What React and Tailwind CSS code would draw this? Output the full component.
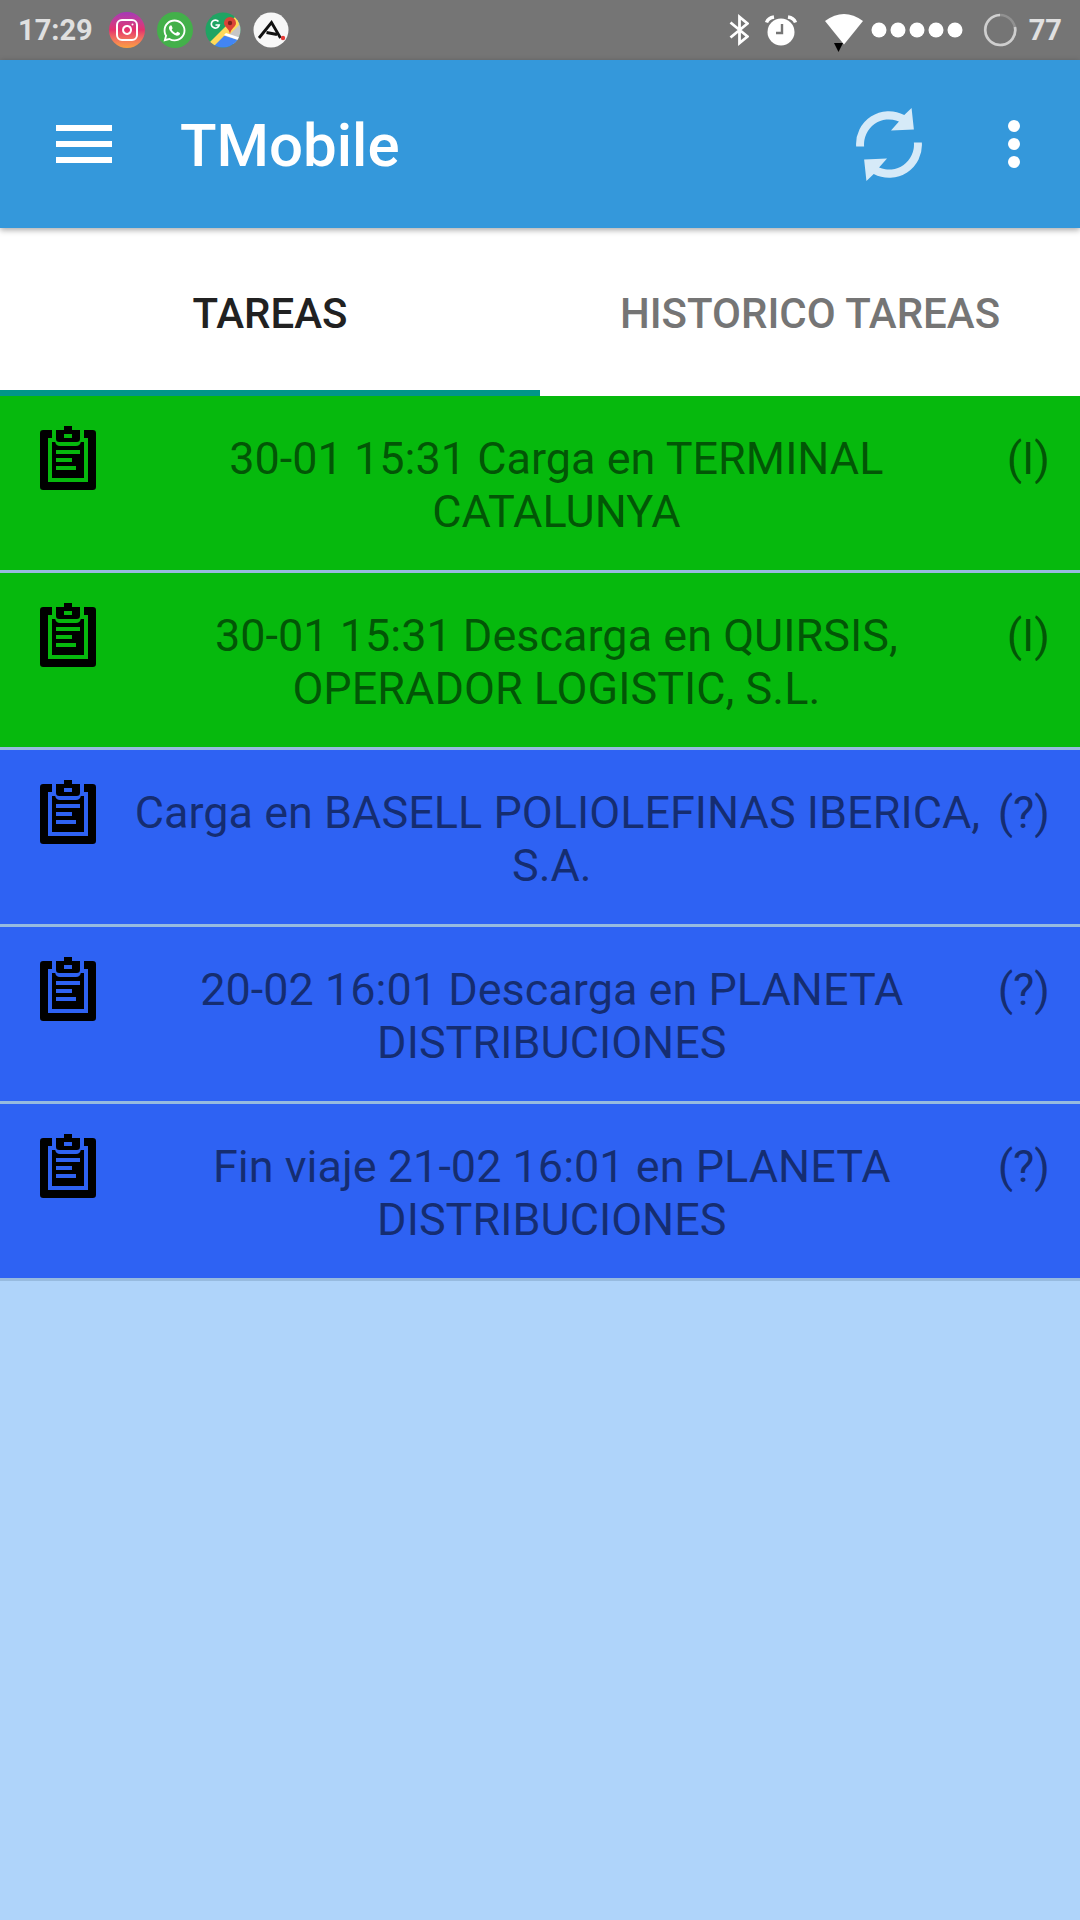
import React, { useState } from "react";
import { FaWhatsapp } from "react-icons/fa";
import { Instagram } from "lucide-react";

const tasks = [
  { id: 1, text: "30-01 15:31 Carga en TERMINAL CATALUNYA", status: "(I)" },
  { id: 2, text: "30-01 15:31 Descarga en QUIRSIS, OPERADOR LOGISTIC, S.L.", status: "(I)" },
  { id: 3, text: " Carga en BASELL POLIOLEFINAS IBERICA, S.A.", status: "(?)" },
  { id: 4, text: "20-02 16:01 Descarga en PLANETA DISTRIBUCIONES", status: "(?)" },
  { id: 5, text: "Fin viaje 21-02 16:01 en PLANETA DISTRIBUCIONES", status: "(?)" },
];

const ClipboardIcon = () => (
  <svg viewBox="0 0 14 16" className="w-14 h-16 shrink-0" aria-hidden="true">
    <path d="M.8 1H3v2H2v11h10V3h-1V1h2.200a.8.8 0 0 1 .8.8v13.400a.8.8 0 0 1-.8.8H.8a.8.8 0 0 1-.8-.8V1.800A.8.8 0 0 1 .8 1Z" />
    <path
      fillRule="evenodd"
      d="M6 0h2v1h2v2.200a.8.8 0 0 1-.8.8H4.800a.8.8 0 0 1-.8-.8V1h2ZM6 2v1h2V2Z"
    />
    <path
      fillRule="evenodd"
      d="M3 4h.8q.2 1 1.200 1h4q1 0 1.200-1h.8v9H3ZM4 6v1h6V6ZM4 8v1h4V8ZM4 10v1h5v-1Z"
    />
  </svg>
);

const RefreshIcon = () => (
  <svg viewBox="0 0 198 220" className="w-[66px] h-[73px]" fill="#d6eaf8" aria-hidden="true">
    <path d="M0 116A99 99 0 0 1 145 21L167 0 174 65 105 68 129 41A75 75 0 0 0 24 116Z" />
    <path d="M198 104A99 99 0 0 1 53 199L31 220 24 155 93 152 69 179A75 75 0 0 0 174 104Z" />
  </svg>
);

const MapsIcon = () => (
  <svg viewBox="0 0 36 36" className="w-9 h-9">
    <defs>
      <clipPath id="mapsClip">
        <circle cx="18" cy="18" r="17.5" />
      </clipPath>
    </defs>
    <g clipPath="url(#mapsClip)">
      <rect width="36" height="36" fill="#1fa463" />
      <path d="M36 4 14 25l22 11Z" fill="#c6c6c6" />
      <path d="M17 23 4 37h32V29Z" fill="#4285f4" />
      <path d="M32 3 2 33l5 3L19 24l5-1 10-10Z" fill="#ffd95a" />
      <path d="M19 23 36 29v-3L21 21Z" fill="#fff" />
      <path d="M25 22c-1-6-6-7-6-11a6 6 0 0 1 12 0c0 4-5 5-6 11Z" fill="#db4437" />
      <circle cx="25" cy="11" r="2.200" fill="#7b231b" />
      <path d="M13.500 9.600A4 4 0 1 0 14.200 13H10.500" fill="none" stroke="#fff" strokeWidth="1.700" />
    </g>
  </svg>
);

const StatusBar = () => (
  <div className="flex items-center justify-between h-[60px] px-[18px] bg-[#757575] text-[#e0e0e0] text-[29px] font-bold">
    <div className="flex items-center gap-4">
      <span className="pt-0.5">17:29</span>
      <div className="flex items-center gap-3">
        <span className="flex items-center justify-center w-9 h-9 rounded-full bg-linear-to-b from-[#a538b8] via-[#e5306c] to-[#fba03c] text-white">
          <Instagram size={24} strokeWidth={2} />
        </span>
        <span className="flex items-center justify-center w-9 h-9 rounded-full bg-[#43b04a] text-white">
          <FaWhatsapp size={25} />
        </span>
        <MapsIcon />
        <svg viewBox="0 0 36 36" className="w-9 h-9">
          <circle cx="18" cy="18" r="17.500" fill="#f7f7f7" />
          <path d="M6 26 18.500 10.500 27.500 26M13.500 20.500 24 22.500" fill="none" stroke="#111" strokeWidth="2.800" />
          <circle cx="30" cy="26" r="2.200" fill="#e53935" />
        </svg>
      </div>
    </div>

    <div className="flex items-center">
      <svg viewBox="0 0 20 32" className="w-5 h-8 mr-4" fill="none" stroke="#fff" strokeWidth="2.800">
        <path d="M1.500 8.500 18.500 22.500 10.500 29V3L18.500 9.500 1.500 23.500" />
      </svg>
      <svg viewBox="0 0 32 32" className="w-8 h-8 mr-7" fill="none" stroke="#fff">
        <circle cx="16" cy="18" r="13.500" fill="#fff" stroke="none" />
        <path d="M1.500 8.500Q3 4 9 3M30.500 8.500Q29 4 23 3" strokeWidth="3.400" />
        <path d="M17 10v9h-6" stroke="#757575" strokeWidth="2.400" />
      </svg>
      <svg viewBox="0 0 38 44" className="w-[38px] h-11 mr-2">
        <path d="M0 13Q19-1 38 13L19 36.500Z" fill="#fff" />
        <path d="M9 35h9l-4.500 9Z" fill="#000" />
      </svg>
      <svg viewBox="0 0 92 16" className="w-[92px] h-4 mr-5" fill="#fff">
        <circle cx="8" cy="8" r="7.500" />
        <circle cx="27" cy="8" r="7.500" />
        <circle cx="46" cy="8" r="7.500" />
        <circle cx="65" cy="8" r="7.500" />
        <circle cx="84" cy="8" r="7.500" />
      </svg>
      <svg viewBox="0 0 34 34" className="w-[34px] h-[34px] mr-3" fill="none" strokeWidth="2.600">
        <circle cx="17" cy="17" r="15" stroke="#919191" />
        <path d="M32 14A15 15 0 1 1 17 2" stroke="#cfcfcf" />
      </svg>
      <span className="pt-0.5">77</span>
    </div>
  </div>
);

const AppBar = () => (
  <header className="relative z-10 flex items-center h-[168px] pl-14 pr-12 bg-[#3498db] shadow-[0_2px_6px_rgba(0,0,0,0.35)]">
    <button type="button" aria-label="Menu" className="flex flex-col gap-2.5 w-14">
      <span className="block w-full h-1.5 bg-white" />
      <span className="block w-full h-1.5 bg-white" />
      <span className="block w-full h-1.5 bg-white" />
    </button>
    <h1 className="ml-[68px] pt-1 flex-1 text-[60px] font-medium text-white">TMobile</h1>
    <button type="button" aria-label="Actualizar">
      <RefreshIcon />
    </button>
    <button type="button" aria-label="Opciones" className="flex flex-col items-center gap-1.5 w-9 ml-[74px]">
      <span className="w-3 h-3 rounded-full bg-white" />
      <span className="w-3 h-3 rounded-full bg-white" />
      <span className="w-3 h-3 rounded-full bg-white" />
    </button>
  </header>
);

const TaskRow = ({ task }) => (
  <li
    className={`flex items-start pl-10 pr-[30px] pb-8 border-b-[3px] border-[#97bbdf] text-[45px] leading-[53px] text-black/55 ${
      task.status === "(I)" ? "bg-[#06b90d]" : "bg-[#2e62f3]"
    }`}
  >
    <div className="pt-[30px] mr-6 text-black">
      <ClipboardIcon />
    </div>
    <p className="flex-1 pt-9 text-center whitespace-pre-wrap">{task.text}</p>
    <span className="pt-9 ml-3.5">{task.status}</span>
  </li>
);

const App = () => {
  const [tab, setTab] = useState("tareas");

  const tabClass = (name) =>
    `flex-1 border-b-[6px] pt-2 text-[42px] font-medium ${
      tab === name ? "border-[#009688] text-[#212121]" : "border-transparent text-[#757575]"
    }`;

  return (
    <div className="min-h-screen bg-[#afd4fa] font-['Roboto',sans-serif]">
      <StatusBar />
      <AppBar />
      <div role="tablist" className="flex h-[168px] bg-white">
        <button
          type="button"
          role="tab"
          aria-selected={tab === "tareas"}
          className={tabClass("tareas")}
          onClick={() => setTab("tareas")}
        >
          TAREAS
        </button>
        <button
          type="button"
          role="tab"
          aria-selected={tab === "historico"}
          className={tabClass("historico")}
          onClick={() => setTab("historico")}
        >
          HISTORICO TAREAS
        </button>
      </div>
      {tab === "tareas" && (
        <ul>
          {tasks.map((task) => (
            <TaskRow key={task.id} task={task} />
          ))}
        </ul>
      )}
    </div>
  );
};

export default App;
